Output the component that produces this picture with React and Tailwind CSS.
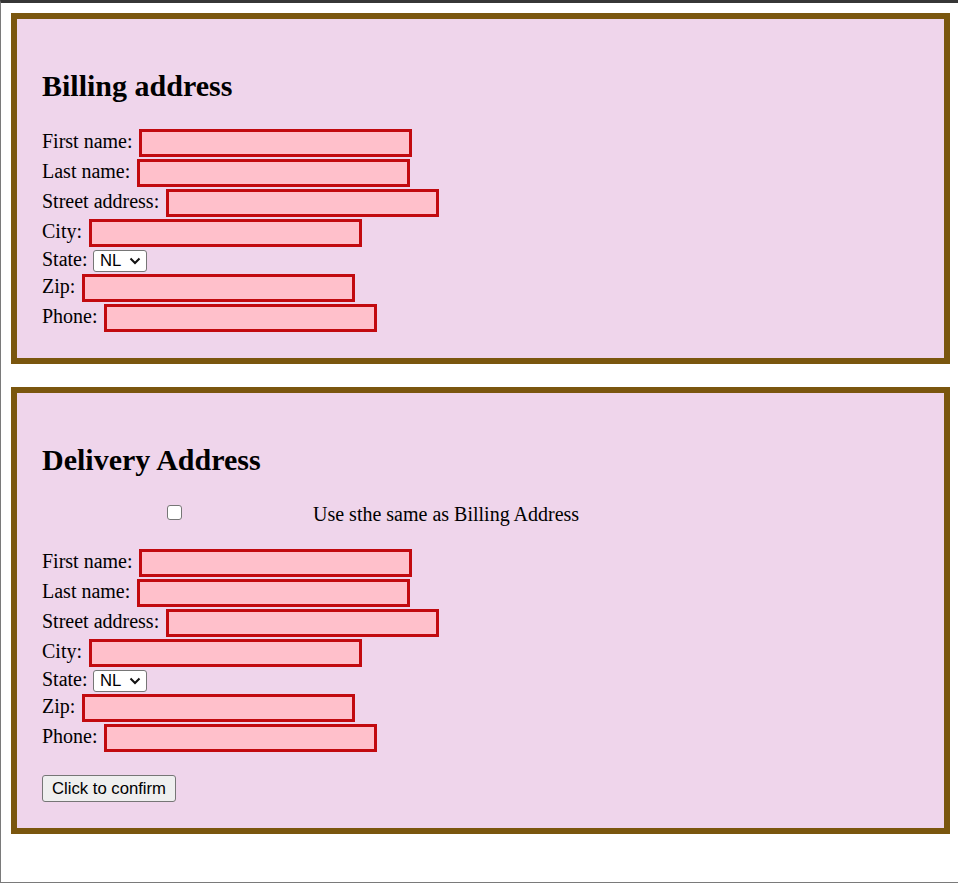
import { useState } from 'react';

const fields = [
  { key: 'first', label: 'First name:' },
  { key: 'last', label: 'Last name:' },
  { key: 'street', label: 'Street address:' },
  { key: 'city', label: 'City:' },
  { key: 'state', label: 'State:', select: true },
  { key: 'zip', label: 'Zip:' },
  { key: 'phone', label: 'Phone:' },
];

function Chevron() {
  return (
    <svg width="12" height="8" viewBox="0 0 12 8" className="pointer-events-none absolute right-[6px] top-[7px]">
      <path d="M1.5 1.5 L6 6 L10.5 1.5" fill="none" stroke="#111" strokeWidth="2" />
    </svg>
  );
}

function AddressFields({ prefix, values, onChange }) {
  return (
    <div>
      {fields.map(f =>
        f.select ? (
          <div key={prefix + f.key} className="flex items-center h-[25px] gap-[5.5px]">
            <span className="mb-[3px]">{f.label}</span>
            <div className="relative">
              <select
                value={values[f.key] || 'NL'}
                onChange={e => onChange(f.key, e.target.value)}
                className="appearance-none block w-[54px] h-[22px] pl-[6px] bg-white border border-[#767676] rounded-[3px] text-[16.7px] leading-[20px] text-black font-['Liberation_Sans',Arial,sans-serif]"
              >
                <option>NL</option>
                <option>BE</option>
                <option>DE</option>
              </select>
              <Chevron />
            </div>
          </div>
        ) : (
          <div key={prefix + f.key} className="flex items-center h-[30px] gap-[6.5px]">
            <span className="mb-[4px]">{f.label}</span>
            <input
              type="text"
              value={values[f.key] || ''}
              onChange={e => onChange(f.key, e.target.value)}
              className="w-[273px] h-[28px] bg-[#ffc0cb] border-[3px] border-[#c20a0f] outline-none px-1"
            />
          </div>
        )
      )}
    </div>
  );
}

export default function App() {
  const [billing, setBilling] = useState({ state: 'NL' });
  const [delivery, setDelivery] = useState({ state: 'NL' });
  const [same, setSame] = useState(false);

  const shown = same ? billing : delivery;

  return (
    <div className="w-[958px] h-[883px] border-t-[3px] border-t-[#363636] border-l border-b border-l-[#7a7a7a] border-b-[#7a7a7a] bg-white pl-[10px] pt-[10px] font-['Liberation_Serif','Times_New_Roman',serif] text-[20px] text-black">
      <div className="w-[939px] h-[351px] border-[6px] border-[#7a560e] bg-[#efd5eb] pl-[25px] pt-[50px]">
        <h2 className="text-[30px] font-bold leading-[34px] mb-[25px]">Billing address</h2>
        <AddressFields prefix="b" values={billing} onChange={(k, v) => setBilling(b => ({ ...b, [k]: v }))} />
      </div>

      <div className="w-[939px] h-[447px] mt-[23px] border-[6px] border-[#7a560e] bg-[#efd5eb] pl-[25px] pt-[50px]">
        <h2 className="text-[30px] font-bold leading-[34px]">Delivery Address</h2>
        <div className="flex items-center h-[30px] mt-[23px] mb-[18px]">
          <input
            type="checkbox"
            checked={same}
            onChange={() => setSame(s => !s)}
            className="appearance-none w-[15px] h-[15px] ml-[125px] mt-[-5px] bg-white border border-[#767676] rounded-[3px]"
          />
          <span className="ml-[131px] mb-[2px]">Use sthe same as Billing Address</span>
        </div>
        <AddressFields prefix="d" values={shown} onChange={(k, v) => setDelivery(d => ({ ...d, [k]: v }))} />
        <button className="mt-[22px] h-[27px] w-[134px] bg-[#efefef] border border-[#767676] rounded-[3px] text-[16.7px] font-['Liberation_Sans',Arial,sans-serif] leading-[20px]">
          Click to confirm
        </button>
      </div>
    </div>
  );
}
